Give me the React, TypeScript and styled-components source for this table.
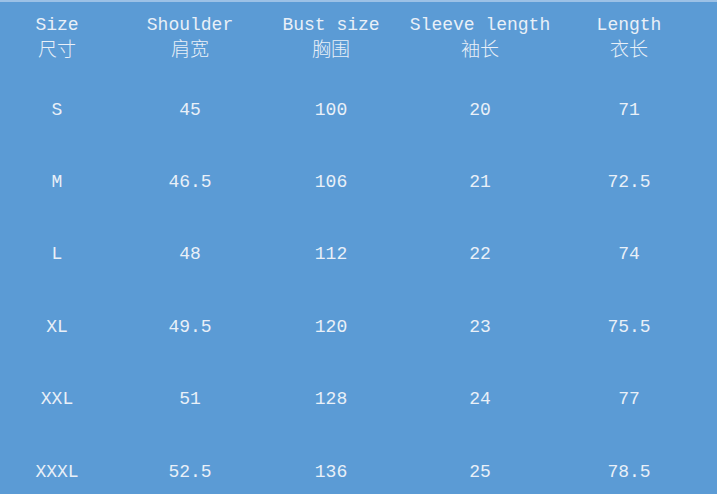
import React from 'react';
import styled, { createGlobalStyle } from 'styled-components';

const GlobalStyle = createGlobalStyle`
  html, body {
    margin: 0;
    padding: 0;
    background: #5b9bd5;
  }
`;

const columns = [
  { en: 'Size', zh: '尺寸' },
  { en: 'Shoulder', zh: '肩宽' },
  { en: 'Bust size', zh: '胸围' },
  { en: 'Sleeve length', zh: '袖长' },
  { en: 'Length', zh: '衣长' },
];

const rows = [
  ['S', '45', '100', '20', '71'],
  ['M', '46.5', '106', '21', '72.5'],
  ['L', '48', '112', '22', '74'],
  ['XL', '49.5', '120', '23', '75.5'],
  ['XXL', '51', '128', '24', '77'],
  ['XXXL', '52.5', '136', '25', '78.5'],
];

const App = () => {
  return (
    <>
      <GlobalStyle />
      <Chart>
        {columns.map((col) => (
          <HeadCell key={col.en}>
            <HeadEn>{col.en}</HeadEn>
            <HeadZh>{col.zh}</HeadZh>
          </HeadCell>
        ))}
        {rows.map((row) =>
          row.map((value, i) => <Cell key={row[0] + i}>{value}</Cell>)
        )}
      </Chart>
    </>
  );
};

export default App;

const Chart = styled.div`
  width: 717px;
  height: 494px;
  box-sizing: border-box;
  overflow: hidden;
  padding-right: 23px;
  border-top: 2px solid #9cc1e6;
  background: #5b9bd5;
  display: grid;
  grid-template-columns: 114px 152px 130px 168px 130px;
  grid-template-rows: 71px repeat(6, 72.4px);
  font-family: 'Liberation Mono', 'Noto Sans CJK SC', monospace;
  color: #e9f0f8;
`;

const HeadCell = styled.div`
  display: flex;
  flex-direction: column;
  align-items: center;
  padding-top: 12px;
`;

const HeadEn = styled.span`
  font-size: 18px;
  line-height: 22px;
  white-space: nowrap;
`;

const HeadZh = styled.span`
  font-family: 'Noto Sans CJK SC', sans-serif;
  font-size: 19px;
  line-height: 24px;
  font-weight: 300;
`;

const Cell = styled.div`
  display: flex;
  align-items: center;
  justify-content: center;
  padding-top: 1px;
  font-size: 18px;
  white-space: nowrap;
`;
